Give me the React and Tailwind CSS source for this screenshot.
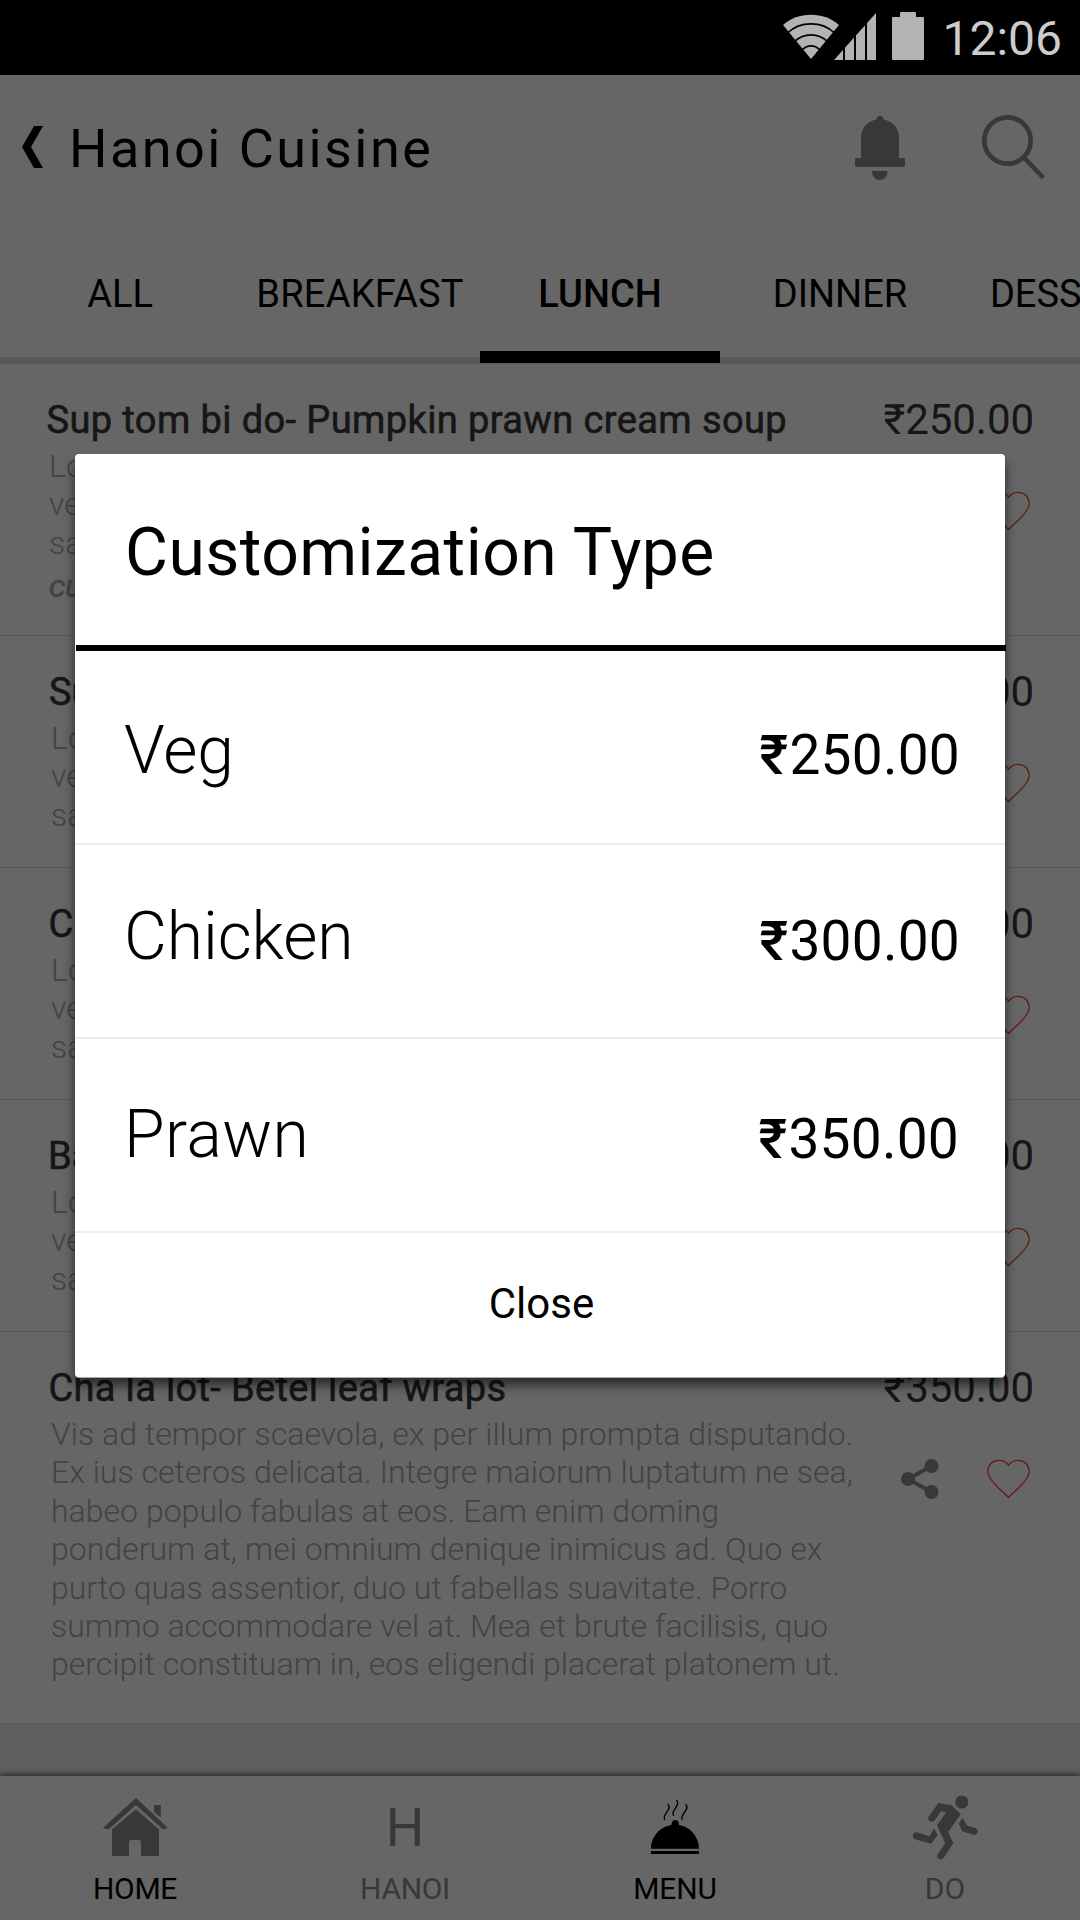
import React from "react";

const TABS = ["ALL", "BREAKFAST", "LUNCH", "DINNER", "DESSERTS"];

const TEASER = ["Lorem ipsum dolor sit amet, molles ad", "verear in his", "salutandi cum"];

const ITEMS = [
  {
    title: "Sup tom bi do- Pumpkin prawn cream soup",
    price: "₹250.00",
    lines: TEASER,
    note: "customize",
    row: "h-[272px]",
    titleClass: "pl-[46.5px] tracking-[0.4px]",
    textClass: "pl-[49px]",
  },
  { title: "Sup", price: "₹250.00", lines: TEASER, row: "h-[232px]", titleClass: "pl-[49px]", textClass: "pl-[51px]" },
  { title: "Cha", price: "₹300.00", lines: TEASER, row: "h-[232px]", titleClass: "pl-[48.5px]", textClass: "pl-[51px]" },
  { title: "Banh", price: "₹300.00", lines: TEASER, row: "h-[232px]", titleClass: "pl-[48px]", textClass: "pl-[51px]" },
  {
    title: "Cha la lot- Betel leaf wraps",
    price: "₹350.00",
    lines: [
      "Vis ad tempor scaevola, ex per illum prompta disputando.",
      "Ex ius ceteros delicata. Integre maiorum luptatum ne sea,",
      "habeo populo fabulas at eos. Eam enim doming",
      "ponderum at, mei omnium denique inimicus ad. Quo ex",
      "purto quas assentior, duo ut fabellas suavitate. Porro",
      "summo accommodare vel at. Mea et brute facilisis, quo",
      "percipit constituam in, eos eligendi placerat platonem ut.",
    ],
    row: "h-[392px]",
    titleClass: "pl-[48.5px] tracking-[0.34px]",
    textClass: "pl-[51px]",
  },
];

const OPTIONS = [
  { name: "Veg", amount: "250.00", row: "pt-[60px] pr-[45px]", nameClass: "tracking-[-0.1px]" },
  { name: "Chicken", amount: "300.00", row: "pt-[52px] pr-[45px]", nameClass: "tracking-[-0.1px]" },
  { name: "Prawn", amount: "350.00", row: "pt-[56px] pr-[46px]", nameClass: "tracking-[0.45px]" },
];

function StatusBar() {
  return (
    <div className="flex h-[75px] shrink-0 items-start justify-end bg-black pr-[18px] text-[#b3b3b3]">
      <svg className="mt-[14px] h-[45px] w-[56px]" viewBox="0 0 56 45">
        <path d="M28 45L0 11C8 4 17 .7 28 .7S48 4 56 11Z" fill="currentColor" />
        <g fill="none" stroke="#000" strokeWidth="1.7">
          <path d="M4.500 19C11 12.500 19 9.800 28 9.800S45 12.500 51.500 19" />
          <path d="M12 27.200C16.500 22.800 22 20.800 28 20.800S39.500 22.800 44 27.200" />
          <path d="M19.500 35.500C22 33 25 31.800 28 31.800S34 33 36.500 35.500" />
        </g>
      </svg>
      <svg className="-ml-[5px] mt-[13px] h-[47px] w-[42px]" viewBox="0 0 42 47">
        <path d="M0 47L42 0V47Z" fill="currentColor" />
        <path d="M10 0V47M21 0V47M32 0V47" stroke="#000" strokeWidth="2" />
      </svg>
      <svg className="ml-4 mt-3 h-12 w-8" viewBox="0 0 32 48">
        <rect y="5" width="32" height="43" rx="1" fill="currentColor" />
        <rect x="8" width="16" height="8" rx="1" fill="currentColor" />
      </svg>
      <span className="ml-[18px] mt-[2px] text-[48px] leading-[74px] text-[#cccccc]">12:06</span>
    </div>
  );
}

function Header() {
  return (
    <header className="flex h-[149px] shrink-0 items-center pl-[22px] pr-[35px]">
      <svg className="mb-[5px] h-[42px] w-[21px]" viewBox="0 0 21 42">
        <path d="M12 0H21L9 21L21 42H12L0 21Z" />
      </svg>
      <h1 className="mb-[2px] ml-[26px] flex-1 text-[54px] leading-[64px] tracking-[2.44px]">Hanoi Cuisine</h1>
      <svg className="mb-[4px] h-[64px] w-[50px] text-[#8c8c8c]" viewBox="0 0 50 64" fill="currentColor">
        <circle cx="25" cy="3.500" r="3.500" />
        <path d="M6 43V22C6 11 14 3.300 25 3.300S44 11 44 22V43Z" />
        <rect y="42" width="50" height="9" rx="1.200" />
        <path d="M17 55H32.500C32.500 61 29 64 24.800 64S17 61 17 55Z" />
      </svg>
      <svg className="mb-[5px] ml-[77px] h-[65px] w-[63px] text-[#8c8c8c]" viewBox="0 0 63 65" fill="none" stroke="currentColor">
        <circle cx="25.500" cy="25.500" r="23.200" strokeWidth="4.700" />
        <path d="M42 42.500L61.500 63" strokeWidth="4.700" />
      </svg>
    </header>
  );
}

function Tabs() {
  return (
    <nav className="flex h-[140px] shrink-0 border-b-[7px] border-[#dcdcdc]">
      {TABS.map((tab) => (
        <div
          key={tab}
          className={
            "relative flex h-[140px] w-[240px] shrink-0 items-center justify-center text-[38px] leading-[46px] " +
            (tab === "LUNCH" ? "font-medium" : tab === "BREAKFAST" ? "tracking-[0.25px]" : "font-normal")
          }
        >
          {tab}
          {tab === "LUNCH" && <span className="absolute inset-x-0 bottom-px h-3 bg-black" />}
        </div>
      ))}
    </nav>
  );
}

function ShareIcon() {
  return (
    <svg className="h-10 w-[38px] text-[#8c8c8c]" viewBox="0 0 38 40" fill="currentColor">
      <path d="M30.500 7L7 20L30.500 33" fill="none" stroke="currentColor" strokeWidth="4" />
      <circle cx="30.500" cy="7" r="7" />
      <circle cx="7" cy="20" r="7" />
      <circle cx="30.500" cy="33" r="7" />
    </svg>
  );
}

function HeartIcon() {
  return (
    <svg className="h-10 w-[43px]" viewBox="0 0 43 40" fill="none" stroke="#f5402f" strokeWidth="1.200">
      <path d="M21.500 38.700C19 35.500 14 31.500 10 27.500C4 21.500 .8 17.500 .8 12.500C.8 6 5.500 1.300 11.500 1.300C16 1.300 19.500 3 21.500 6.300C23.500 3 27 1.300 31.500 1.300C37.500 1.300 42.200 6 42.200 12.500C42.200 17.500 39 21.500 33 27.500C29 31.500 24 35.500 21.500 38.700Z" />
    </svg>
  );
}

function MenuItem({ item }) {
  return (
    <article className={"flex shrink-0 border-b border-[#dedede] bg-white pr-[46px] pt-[33px] " + item.row}>
      <div className="flex-1 whitespace-nowrap">
        <h2 className={"text-[38px] leading-[46px] text-[#383838] [-webkit-text-stroke:0.6px_#383838] " + item.titleClass}>
          {item.title}
        </h2>
        <div className={"mt-1 text-[32px] font-light leading-[38.4px] tracking-[0.02px] text-[#a9a9a9] " + item.textClass}>
          {item.lines.map((line) => (
            <p key={line}>{line}</p>
          ))}
          {item.note && <p className="mt-[4.5px] font-normal italic [-webkit-text-stroke:0.6px_#a9a9a9]">{item.note}</p>}
        </div>
      </div>
      <div className="flex flex-col items-end">
        <span className="text-[42px] leading-[46px] tracking-[-0.05px] text-[#383838]">{item.price}</span>
        <div className="mr-1 mt-[48px] flex h-10 gap-[48px]">
          <ShareIcon />
          <HeartIcon />
        </div>
      </div>
    </article>
  );
}

function HomeIcon() {
  return (
    <svg className="size-[66px]" viewBox="0 0 66 66" fill="currentColor">
      <path d="M34 3L65.700 32.700Q63.500 34.500 60.500 34L34 10L7 34Q3 34.500 1 32.700Z" />
      <path d="M52 10H58.800V22.500L52 17Z" />
      <path d="M33.800 14.300L57 34.500V61H39V47Q39 45 37 45H29Q27 45 27 47V61H10V34.500Z" />
    </svg>
  );
}

function DishIcon() {
  return (
    <svg className="size-[66px]" viewBox="0 0 66 66" fill="currentColor">
      <path d="M9 53.700C9 42 18 31.500 29.500 30C29.500 26.800 31 25 33.300 25S37 26.800 37 30C48 31.500 57 42 57 53.700Z" />
      <path d="M9 56H57V59H9Z" />
      <g fill="none" stroke="currentColor" strokeWidth="1.300" strokeLinecap="round">
        <path d="M26 9.500C31 14 19 20 22.800 24.600" />
        <path d="M34.700 5.500C39.500 10 27.800 16 31.600 20.300" />
        <path d="M43.800 9.500C49 14 37 20 40.300 24.600" />
      </g>
    </svg>
  );
}

function RunnerIcon() {
  return (
    <svg className="size-[66px]" viewBox="0 0 66 66" fill="currentColor">
      <circle cx="49.800" cy="7" r="6.600" />
      <path d="M26.400 8L39.500 10.300L48.800 19.300L36.200 37L41.200 48.300L31.800 62.800C29 66.500 23.500 63 25.500 59.500L33.300 48.300L25 30.300L34.300 17.300L29.200 16.300L22.700 25.200C19.500 29 14.500 25.500 16.600 21.800Z" />
      <path d="M21.900 33.300L25.700 40L19.200 48.700L3 44.300C-.8 42.500 .8 36.700 4.800 37.200L17.500 41.300Z" />
      <path d="M50.500 22.700L54.900 30.600L63.200 33C67.500 34.500 65.800 40.300 61.800 39.700L50.400 36.600L46.700 28.700Z" />
    </svg>
  );
}

function BottomNav() {
  const entries = [
    { label: "HOME", icon: <HomeIcon />, iconClass: "text-[#8c8c8c]", labelClass: "text-black tracking-[-0.3px]" },
    {
      label: "HANOI",
      icon: <span className="text-[54px] leading-[66px]">H</span>,
      iconClass: "text-[#8c8c8c]",
      labelClass: "text-[#8c8c8c] tracking-[-0.3px]",
    },
    { label: "MENU", icon: <DishIcon />, iconClass: "text-black", labelClass: "text-black tracking-[-0.2px]" },
    { label: "DO", icon: <RunnerIcon />, iconClass: "text-[#8c8c8c]", labelClass: "text-[#8c8c8c]" },
  ];
  return (
    <nav className="grid h-[144px] shrink-0 grid-cols-4 bg-white pt-[19px] shadow-[0_-1px_6px_rgba(0,0,0,0.7)]">
      {entries.map((e) => (
        <div key={e.label} className="flex flex-col items-center">
          <div className={"flex h-[66px] items-center " + e.iconClass}>{e.icon}</div>
          <span className={"mt-[10px] text-[30px] leading-[36px] " + e.labelClass}>{e.label}</span>
        </div>
      ))}
    </nav>
  );
}

function CustomizationDialog() {
  return (
    <section
      role="dialog"
      className="mt-[379px] flex h-[923px] w-[930px] flex-col rounded-[4px] bg-white shadow-[0_1px_0_#aaaaaa,0_8px_12px_rgba(0,0,0,0.6)]"
    >
      <div className="flex h-[191px] items-center pl-[50px] pt-[6px]">
        <h2 className="text-[66px] leading-[80px] tracking-[0.45px]">Customization Type</h2>
      </div>
      <div className="-mr-px ml-px h-[6px] bg-black" />
      {OPTIONS.map((o) => (
        <div key={o.name} className={"flex h-[194px] items-baseline justify-between border-b-2 border-[#ededed] pl-[49px] " + o.row}>
          <span className={"text-[66px] font-light leading-[80px] " + o.nameClass}>{o.name}</span>
          <span className="flex translate-y-px text-[55px] leading-[66px] tracking-[0.25px]">
            <span className="w-[30px] font-medium">₹</span>
            <span>{o.amount}</span>
          </span>
        </div>
      ))}
      <button className="flex flex-1 items-center justify-center pb-[3px] pl-[3px] text-[42px] leading-[50px]">Close</button>
    </section>
  );
}

export default function App() {
  return (
    <div className="relative flex h-[1920px] w-[1080px] flex-col overflow-hidden bg-white font-[Roboto,sans-serif] text-black">
      <StatusBar />
      <Header />
      <Tabs />
      <main className="flex flex-1 flex-col bg-[#ebebeb]">
        {ITEMS.map((item) => (
          <MenuItem key={item.title} item={item} />
        ))}
      </main>
      <BottomNav />
      <div className="absolute inset-x-0 bottom-0 top-[75px] flex items-start justify-center bg-black/60">
        <CustomizationDialog />
      </div>
    </div>
  );
}
